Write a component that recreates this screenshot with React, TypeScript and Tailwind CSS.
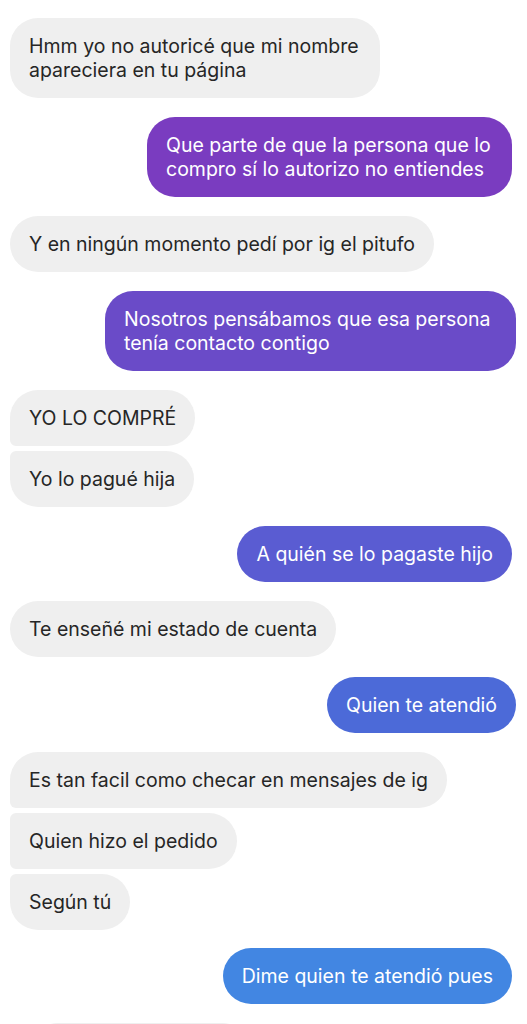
import React from "react";

type Msg = {
  lines: string[];
  mine?: boolean;
  color?: string;
  shape?: string;
  mt: string;
  mr?: string;
};

const messages: Msg[] = [
  {
    lines: ["Hmm yo no autoricé que mi nombre", "apareciera en tu página"],
    mt: "mt-[18px]",
    shape: "rounded-[28px] w-[370px]",
  },
  {
    lines: ["Que parte de que la persona que lo", "compro sí lo autorizo no entiendes"],
    mine: true,
    color: "bg-[#7a3cc0]",
    mt: "mt-[19px]",
    mr: "mr-[15px]",
    shape: "rounded-[28px] w-[365px]",
  },
  { lines: ["Y en ningún momento pedí por ig el pitufo"], mt: "mt-[19px]", shape: "rounded-[28px]" },
  {
    lines: ["Nosotros pensábamos que esa persona", "tenía contacto contigo"],
    mine: true,
    color: "bg-[#6a4bc8]",
    mt: "mt-[19px]",
    mr: "mr-[11px]",
    shape: "rounded-[28px] w-[411px]",
  },
  { lines: ["YO LO COMPRÉ"], mt: "mt-[19px]", shape: "rounded-[28px] rounded-bl-[6px]" },
  { lines: ["Yo lo pagué hija"], mt: "mt-[5px]", shape: "rounded-[28px] rounded-tl-[6px]" },
  {
    lines: ["A quién se lo pagaste hijo"],
    mine: true,
    color: "bg-[#5a5cd2]",
    mt: "mt-[19px]",
    mr: "mr-[15px]",
    shape: "rounded-[28px]",
  },
  { lines: ["Te enseñé mi estado de cuenta"], mt: "mt-[19px]", shape: "rounded-[28px]" },
  {
    lines: ["Quien te atendió"],
    mine: true,
    color: "bg-[#4c6ad8]",
    mt: "mt-[20px]",
    mr: "mr-[11px]",
    shape: "rounded-[28px]",
  },
  {
    lines: ["Es tan facil como checar en mensajes de ig"],
    mt: "mt-[19px]",
    shape: "rounded-[28px] rounded-bl-[6px]",
  },
  {
    lines: ["Quien hizo el pedido"],
    mt: "mt-[5px]",
    shape: "rounded-[28px] rounded-tl-[6px] rounded-bl-[6px]",
  },
  { lines: ["Según tú"], mt: "mt-[5px]", shape: "rounded-[28px] rounded-tl-[6px]" },
  {
    lines: ["Dime quien te atendió pues"],
    mine: true,
    color: "bg-[#4286e2]",
    mt: "mt-[18px]",
    mr: "mr-[15px]",
    shape: "rounded-[28px]",
  },
];

function Bubble({ msg }: { msg: Msg }) {
  const body = msg.lines.map((l, i) => (
    <div key={i} className="whitespace-nowrap">
      {l}
    </div>
  ));
  if (msg.mine) {
    return (
      <div className={`flex justify-end ${msg.mt} ${msg.mr}`}>
        <div
          className={`${msg.color} ${msg.shape} px-[19px] py-[16px] text-white text-[19.5px] leading-[24px]`}
        >
          {body}
        </div>
      </div>
    );
  }
  return (
    <div className={`flex justify-start ${msg.mt} ml-[10px]`}>
      <div
        className={`bg-[#efefef] ${msg.shape} px-[19px] py-[16px] text-[#262626] text-[19.5px] leading-[24px]`}
      >
        {body}
      </div>
    </div>
  );
}

export default function App() {
  return (
    <div
      className="w-[527px] h-[1024px] overflow-hidden bg-white"
      style={{ fontFamily: "Inter, 'Noto Sans', sans-serif" }}
    >
      {/* previous message, cut off at the top */}
      <div className="flex justify-end mr-[30px] -mt-[60px]">
        <div className="bg-[#7a3cc0] rounded-[28px] w-[370px] h-[60px]" />
      </div>

      {messages.map((m, i) => (
        <Bubble key={i} msg={m} />
      ))}

      {/* next message, cut off at the bottom */}
      <div className="flex justify-start ml-[30px] mt-[19px]">
        <div className="bg-[#efefef] rounded-[28px] w-[220px] h-[56px]" />
      </div>
    </div>
  );
}
